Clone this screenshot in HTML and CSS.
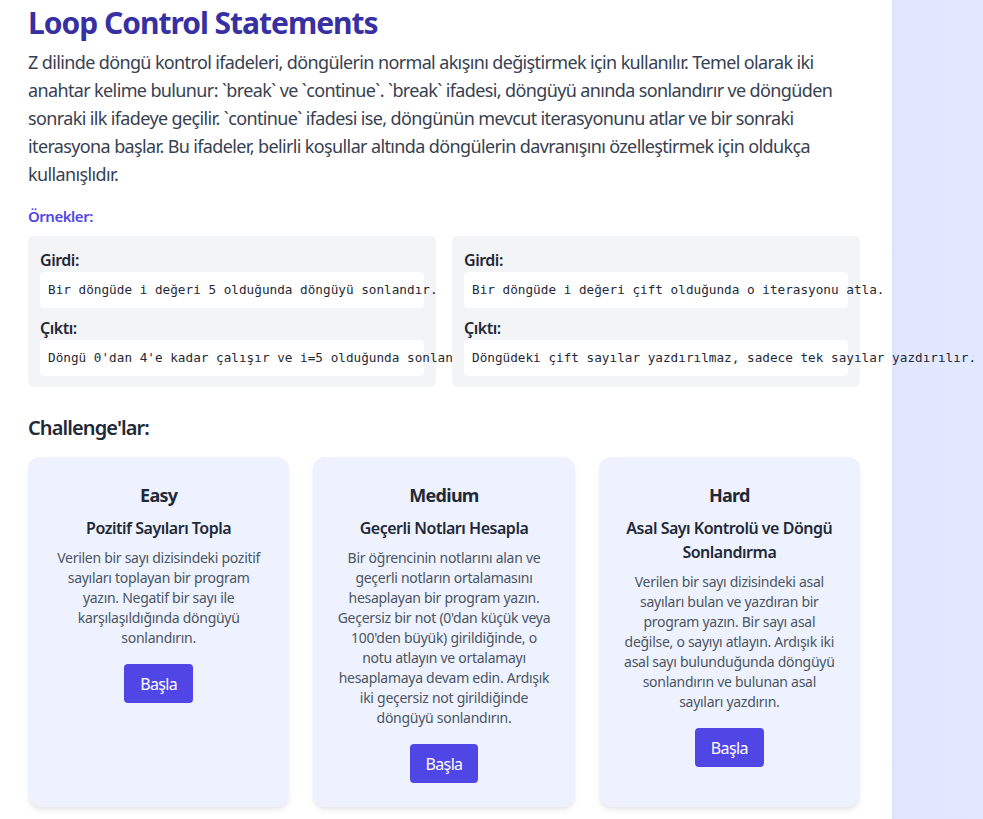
FILE: index.html
```html
<!DOCTYPE html>
<html lang="tr">
<head>
<meta charset="utf-8">
<title>Loop Control Statements</title>
<link rel="stylesheet" href="styles.css">
</head>
<body>
<div class="page">
  <main class="main">
    <h1 class="title">Loop Control Statements</h1>
    <p class="intro">Z dilinde döngü kontrol ifadeleri, döngülerin normal akışını değiştirmek için kullanılır. Temel olarak iki anahtar kelime bulunur: `break` ve `continue`. `break` ifadesi, döngüyü anında sonlandırır ve döngüden sonraki ilk ifadeye geçilir. `continue` ifadesi ise, döngünün mevcut iterasyonunu atlar ve bir sonraki iterasyona başlar. Bu ifadeler, belirli koşullar altında döngülerin davranışını özelleştirmek için oldukça kullanışlıdır.</p>

    <h3 class="examples-title">Örnekler:</h3>
    <div class="examples">
      <div class="example">
        <h4 class="ex-label">Girdi:</h4>
        <pre class="code">Bir döngüde i değeri 5 olduğunda döngüyü sonlandır.</pre>
        <h4 class="ex-label">Çıktı:</h4>
        <pre class="code">Döngü 0'dan 4'e kadar çalışır ve i=5 olduğunda sonlanır.</pre>
      </div>
      <div class="example">
        <h4 class="ex-label">Girdi:</h4>
        <pre class="code">Bir döngüde i değeri çift olduğunda o iterasyonu atla.</pre>
        <h4 class="ex-label">Çıktı:</h4>
        <pre class="code">Döngüdeki çift sayılar yazdırılmaz, sadece tek sayılar yazdırılır.</pre>
      </div>
    </div>

    <h2 class="challenges-title">Challenge'lar:</h2>
    <div class="challenges">
      <div class="challenge">
        <h3 class="level">Easy</h3>
        <h4 class="ch-name">Pozitif Sayıları Topla</h4>
        <p class="ch-desc">Verilen bir sayı dizisindeki pozitif sayıları toplayan bir program yazın. Negatif bir sayı ile karşılaşıldığında döngüyü sonlandırın.</p>
        <button class="start">Başla</button>
      </div>
      <div class="challenge">
        <h3 class="level">Medium</h3>
        <h4 class="ch-name">Geçerli Notları Hesapla</h4>
        <p class="ch-desc">Bir öğrencinin notlarını alan ve geçerli notların ortalamasını hesaplayan bir program yazın. Geçersiz bir not (0'dan küçük veya 100'den büyük) girildiğinde, o notu atlayın ve ortalamayı hesaplamaya devam edin. Ardışık iki geçersiz not girildiğinde döngüyü sonlandırın.</p>
        <button class="start">Başla</button>
      </div>
      <div class="challenge">
        <h3 class="level">Hard</h3>
        <h4 class="ch-name">Asal Sayı Kontrolü ve Döngü Sonlandırma</h4>
        <p class="ch-desc">Verilen bir sayı dizisindeki asal sayıları bulan ve yazdıran bir program yazın. Bir sayı asal değilse, o sayıyı atlayın. Ardışık iki asal sayı bulunduğunda döngüyü sonlandırın ve bulunan asal sayıları yazdırın.</p>
        <button class="start">Başla</button>
      </div>
    </div>
  </main>
  <aside class="sidebar"></aside>
</div>
</body>
</html>
```

FILE: styles.css
```css
* { box-sizing: border-box; }

html, body {
  margin: 0;
  padding: 0;
  background: #ffffff;
}

body {
  font-family: "Noto Sans", "Open Sans", "DejaVu Sans", sans-serif;
  letter-spacing: -0.03em;
  color: #374151;
}

.page {
  display: flex;
  min-height: 819px;
}

.main {
  flex: 1;
  min-width: 0;
  padding: 0 32px 0 28px;
}

.sidebar {
  width: 91px;
  flex: none;
  background: linear-gradient(90deg, #dde3fb 0px, #e0e7ff 6px, #e1e8ff 100%);
}

.title {
  margin: 0;
  font-size: 30px;
  line-height: 36px;
  font-weight: 700;
  letter-spacing: -0.034em;
  color: #3730a3;
  padding-top: 5px;
}

.intro {
  margin: 7px 0 0;
  font-size: 18px;
  line-height: 28px;
  letter-spacing: -0.035em;
  color: #374151;
}

.examples-title {
  margin: 16px 0 0;
  font-size: 15px;
  line-height: 24px;
  font-weight: 600;
  color: #4f46e5;
}

.examples {
  margin-top: 8px;
  display: grid;
  grid-template-columns: minmax(0, 1fr) minmax(0, 1fr);
  gap: 16px;
}

.example {
  position: relative;
  min-width: 0;
  background: #f3f4f6;
  border-radius: 6px;
  padding: 12px 12px 11px;
}

.ex-label {
  margin: 0;
  font-size: 16px;
  line-height: 24px;
  font-weight: 600;
  color: #1f2937;
}

.code {
  margin: 0 0 8px;
  background: #ffffff;
  border-radius: 4px;
  padding: 8px;
  font-family: "DejaVu Sans Mono", "Liberation Mono", monospace;
  font-size: 12.7px;
  line-height: 20px;
  letter-spacing: 0;
  color: #1f2937;
  white-space: pre;
  overflow: visible;
}

.code:last-child { margin-bottom: 0; }

.challenges-title {
  margin: 27px 0 0;
  font-size: 20px;
  line-height: 28px;
  font-weight: 600;
  letter-spacing: -0.045em;
  color: #1f2937;
}

.challenges {
  margin-top: 15px;
  display: grid;
  grid-template-columns: repeat(3, minmax(0, 1fr));
  gap: 24px;
}

.challenge {
  background: #eef2ff;
  border-radius: 12px;
  padding: 24px;
  text-align: center;
  box-shadow: 0 4px 6px -1px rgba(0,0,0,0.08), 0 2px 4px -2px rgba(0,0,0,0.06);
}

.level {
  margin: 0 0 7px;
  font-size: 18px;
  line-height: 28px;
  font-weight: 700;
  letter-spacing: -0.04em;
  color: #1f2937;
}

.ch-name {
  margin: 0 0 8px;
  font-size: 16px;
  line-height: 24px;
  font-weight: 600;
  color: #1f2937;
}

.ch-desc {
  margin: 0;
  font-size: 14px;
  line-height: 20px;
  letter-spacing: -0.02em;
  color: #4b5563;
}

.start {
  margin-top: 16px;
  border: none;
  background: #4f46e5;
  color: #ffffff;
  font-family: inherit;
  letter-spacing: -0.04em;
  font-size: 16px;
  line-height: 24px;
  padding: 8px 16px 7px;
  border-radius: 4px;
  cursor: pointer;
}
```
